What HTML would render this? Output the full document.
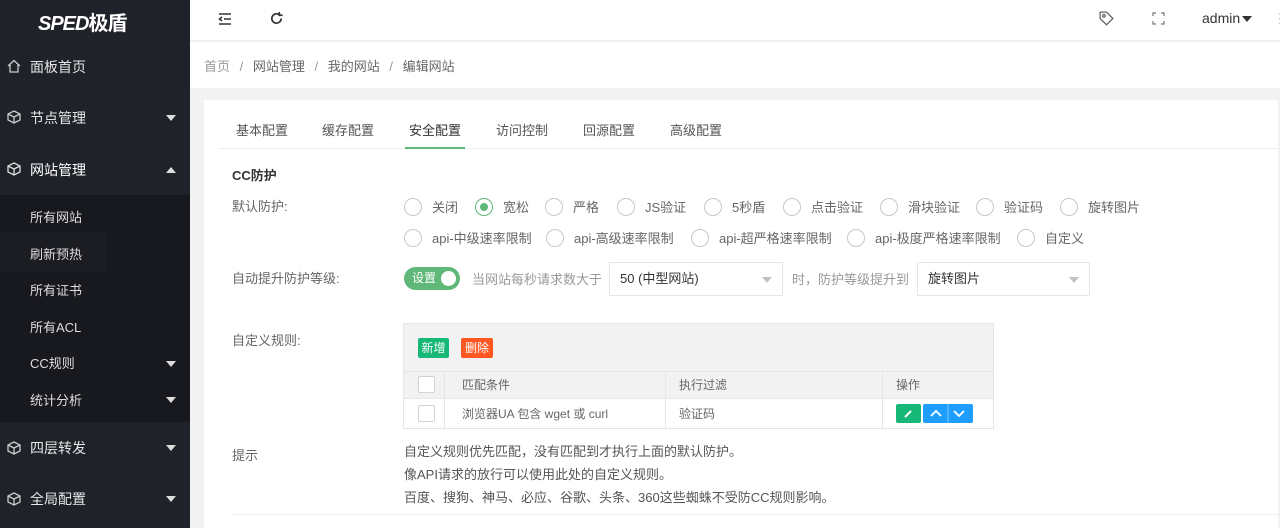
<!DOCTYPE html>
<html><head><meta charset="utf-8"><style>
*{margin:0;padding:0;box-sizing:border-box}
body{width:1280px;height:528px;overflow:hidden;background:#f2f2f2;font-family:"Liberation Sans","Noto Sans CJK SC",sans-serif;font-size:13px;color:#333;position:relative}
.a{position:absolute;white-space:nowrap}
#side{position:absolute;left:0;top:0;width:190px;height:528px;background:#20222a}
#sub{position:absolute;left:0;top:195px;width:190px;height:227px;background:#18191e}
.sm{color:#ddd;font-size:13px}
.mi{color:#e6e6e6;font-size:14px}
.tri{position:absolute;width:0;height:0;border-left:5px solid transparent;border-right:5px solid transparent;border-top:6px solid #ddd}
.triu{border-top:none;border-bottom:6px solid #ddd}
.r{display:inline-block;width:18px;height:18px;border:1px solid #c8c8c8;border-radius:50%;vertical-align:middle;margin-right:10px;position:relative}
.r.on{border-color:#5fb878}
.r.on:after{content:"";position:absolute;left:4px;top:4px;width:8px;height:8px;border-radius:50%;background:#5fb878}
.rl{color:#666;font-size:13px;vertical-align:middle}
.opt{position:absolute;white-space:nowrap}
.sel{position:absolute;height:34px;border:1px solid #e6e6e6;background:#fff;font-size:13px;color:#333;padding:0 10px;line-height:32px}
.sel:after{content:"";position:absolute;right:10px;top:14px;border-left:5px solid transparent;border-right:5px solid transparent;border-top:6px solid #c2c2c2}
.lab{color:#666;font-size:13px}
</style></head><body>
<div id="side">
<div class="a" style="left:38px;top:7px;color:#fff;font-size:20px;font-weight:bold;font-style:italic;letter-spacing:-1px">SPED<span style="font-style:normal">极盾</span></div>
<div class="a mi" style="left:30px;top:57px">面板首页</div>
<svg class="a" style="left:7px;top:59px" width="14" height="14" viewBox="0 0 14 14" fill="none" stroke="#ccc" stroke-width="1.3"><path d="M1 7 7 1.5 13 7M3 5.5V13h8V5.5"/></svg>
<div class="a mi" style="left:30px;top:108px">节点管理</div>
<svg class="a" style="left:7px;top:110px" width="14" height="14" viewBox="0 0 14 14" fill="none" stroke="#ccc" stroke-width="1.3"><path d="M7 1 13 4v6l-6 3-6-3V4zM1 4l6 3 6-3M7 7v6"/></svg>
<div class="tri" style="left:166px;top:115px"></div>
<div class="a mi" style="left:30px;top:160px;color:#fff">网站管理</div>
<svg class="a" style="left:7px;top:162px" width="14" height="14" viewBox="0 0 14 14" fill="none" stroke="#ddd" stroke-width="1.3"><path d="M7 1 13 4v6l-6 3-6-3V4zM1 4l6 3 6-3M7 7v6"/></svg>
<div class="tri triu" style="left:166px;top:167px"></div>
<div id="sub"></div>
<div class="a" style="left:0;top:232px;width:106px;height:40px;background:#1c1d22"></div>
<div class="a sm" style="left:30px;top:207px">所有网站</div>
<div class="a sm" style="left:30px;top:244px">刷新预热</div>
<div class="a sm" style="left:30px;top:280px">所有证书</div>
<div class="a sm" style="left:30px;top:317px">所有ACL</div>
<div class="a sm" style="left:30px;top:353px">CC规则</div>
<div class="tri" style="left:166px;top:361px"></div>
<div class="a sm" style="left:30px;top:390px">统计分析</div>
<div class="tri" style="left:166px;top:397px"></div>
<div class="a mi" style="left:30px;top:438px">四层转发</div>
<svg class="a" style="left:7px;top:441px" width="14" height="14" viewBox="0 0 14 14" fill="none" stroke="#ccc" stroke-width="1.3"><path d="M7 1 13 4v6l-6 3-6-3V4zM1 4l6 3 6-3M7 7v6"/></svg>
<div class="tri" style="left:166px;top:445px"></div>
<div class="a mi" style="left:30px;top:489px">全局配置</div>
<svg class="a" style="left:7px;top:492px" width="14" height="14" viewBox="0 0 14 14" fill="none" stroke="#ccc" stroke-width="1.3"><path d="M7 1 13 4v6l-6 3-6-3V4zM1 4l6 3 6-3M7 7v6"/></svg>
<div class="tri" style="left:166px;top:496px"></div>
</div>
<div class="a" style="left:190px;top:0;width:1090px;height:41px;background:#fff;border-bottom:1px solid #eee"></div>
<svg class="a" style="left:218px;top:12px" width="14" height="14" viewBox="0 0 14 14" fill="none" stroke="#333" stroke-width="1.6"><path d="M1 2h12M6 7h7M1 12h12M4 5 1.5 7 4 9"/></svg>
<svg class="a" style="left:269px;top:11px" width="15" height="15" viewBox="0 0 16 16" fill="none" stroke="#333" stroke-width="1.8"><path d="M13 8a5 5 0 1 1-2-4M11 1v3.5h3.5"/></svg>
<svg class="a" style="left:1098px;top:10px" width="17" height="17" viewBox="0 0 16 16" fill="none" stroke="#666" stroke-width="1.2"><path d="M2 2h6l6 6-6 6-6-6z"/><circle cx="5.5" cy="5.5" r="1.2"/></svg>
<svg class="a" style="left:1152px;top:12px" width="13" height="13" viewBox="0 0 13 13" fill="none" stroke="#777" stroke-width="1.2"><path d="M1 4V1h3M9 1h3v3M12 9v3H9M4 12H1V9"/></svg>
<div class="a" style="left:1202px;top:10px;font-size:14px;color:#333">admin</div>
<div class="tri" style="left:1242px;top:16px;border-top-color:#333"></div>
<div class="a" style="left:1273px;top:11px;color:#ccc">⋮</div>
<div class="a" style="left:190px;top:42px;width:1090px;height:46px;background:#fff"></div>
<div class="a" style="left:204px;top:56px;color:#999">首页 <span style="margin:0 6px">/</span> <span style="color:#666">网站管理</span> <span style="margin:0 6px">/</span> <span style="color:#666">我的网站</span> <span style="margin:0 6px">/</span> <span style="color:#666">编辑网站</span></div>
<div class="a" style="left:204px;top:100px;width:1074px;height:428px;background:#fff"></div>
<div class="a" style="left:218px;top:148px;width:1060px;height:1px;background:#eee"></div>
<div class="a" style="left:236px;top:120px;color:#555">基本配置</div>
<div class="a" style="left:322px;top:120px;color:#555">缓存配置</div>
<div class="a" style="left:409px;top:120px;color:#333">安全配置</div>
<div class="a" style="left:405px;top:147px;width:60px;height:2px;background:#5fb878"></div>
<div class="a" style="left:496px;top:120px;color:#555">访问控制</div>
<div class="a" style="left:583px;top:120px;color:#555">回源配置</div>
<div class="a" style="left:670px;top:120px;color:#555">高级配置</div>
<div class="a" style="left:232px;top:165px;font-weight:bold;color:#333">CC防护</div>
<div class="a lab" style="left:232px;top:196px">默认防护:</div>
<div class="opt" style="left:404px;top:197px"><span class="r"></span><span class="rl">关闭</span></div>
<div class="opt" style="left:475px;top:197px"><span class="r on"></span><span class="rl">宽松</span></div>
<div class="opt" style="left:545px;top:197px"><span class="r"></span><span class="rl">严格</span></div>
<div class="opt" style="left:617px;top:197px"><span class="r"></span><span class="rl">JS验证</span></div>
<div class="opt" style="left:704px;top:197px"><span class="r"></span><span class="rl">5秒盾</span></div>
<div class="opt" style="left:783px;top:197px"><span class="r"></span><span class="rl">点击验证</span></div>
<div class="opt" style="left:880px;top:197px"><span class="r"></span><span class="rl">滑块验证</span></div>
<div class="opt" style="left:976px;top:197px"><span class="r"></span><span class="rl">验证码</span></div>
<div class="opt" style="left:1060px;top:197px"><span class="r"></span><span class="rl">旋转图片</span></div>
<div class="opt" style="left:404px;top:228px"><span class="r"></span><span class="rl">api-中级速率限制</span></div>
<div class="opt" style="left:546px;top:228px"><span class="r"></span><span class="rl">api-高级速率限制</span></div>
<div class="opt" style="left:691px;top:228px"><span class="r"></span><span class="rl">api-超严格速率限制</span></div>
<div class="opt" style="left:847px;top:228px"><span class="r"></span><span class="rl">api-极度严格速率限制</span></div>
<div class="opt" style="left:1017px;top:228px"><span class="r"></span><span class="rl">自定义</span></div>
<div class="a lab" style="left:232px;top:268px">自动提升防护等级:</div>
<div class="a" style="left:404px;top:267px;width:56px;height:23px;border-radius:12px;background:#5fb878;color:#fff;font-size:12px;line-height:23px;padding-left:8px">设置<span style="position:absolute;right:4px;top:4px;width:15px;height:15px;border-radius:50%;background:#fff"></span></div>
<div class="a" style="left:472px;top:269px;color:#999">当网站每秒请求数大于</div>
<div class="sel" style="left:609px;top:262px;width:174px">50 (中型网站)</div>
<div class="a" style="left:792px;top:269px;color:#999">时，防护等级提升到</div>
<div class="sel" style="left:917px;top:262px;width:173px">旋转图片</div>
<div class="a lab" style="left:232px;top:330px">自定义规则:</div>
<div class="a" style="left:403px;top:323px;width:591px;height:106px;border:1px solid #e6e6e6;background:#f2f2f2"></div>
<div class="a" style="left:418px;top:338px;width:31px;height:20px;background:#16b777;color:#fff;font-size:12px;line-height:20px;text-align:center;border-radius:2px">新增</div>
<div class="a" style="left:461px;top:338px;width:32px;height:20px;background:#ff5722;color:#fff;font-size:12px;line-height:20px;text-align:center;border-radius:2px">删除</div>
<div class="a" style="left:404px;top:371px;width:589px;height:1px;background:#e6e6e6"></div>
<div class="a" style="left:404px;top:398px;width:589px;height:30px;background:#fff;border-top:1px solid #e6e6e6"></div>
<div class="a" style="left:444px;top:371px;width:1px;height:57px;background:#e6e6e6"></div>
<div class="a" style="left:665px;top:371px;width:1px;height:57px;background:#e6e6e6"></div>
<div class="a" style="left:882px;top:371px;width:1px;height:57px;background:#e6e6e6"></div>
<div class="a" style="left:418px;top:376px;width:17px;height:17px;border:1px solid #d2d2d2;background:#fff;border-radius:2px"></div>
<div class="a" style="left:418px;top:405px;width:17px;height:17px;border:1px solid #d2d2d2;background:#fff;border-radius:2px"></div>
<div class="a" style="left:462px;top:376px;color:#666;font-size:12px">匹配条件</div>
<div class="a" style="left:679px;top:376px;color:#666;font-size:12px">执行过滤</div>
<div class="a" style="left:896px;top:376px;color:#666;font-size:12px">操作</div>
<div class="a" style="left:462px;top:405px;color:#666;font-size:12px">浏览器UA 包含 wget 或 curl</div>
<div class="a" style="left:679px;top:405px;color:#666;font-size:12px">验证码</div>
<div class="a" style="left:896px;top:404px;width:25px;height:19px;background:#16b777;border-radius:2px"><svg width="25" height="19"><path d="M9 13l6-6" stroke="#fff" stroke-width="2"/></svg></div>
<div class="a" style="left:923px;top:404px;width:50px;height:19px;background:#1e9fff;border-radius:2px"><svg width="50" height="19" fill="none" stroke="#fff" stroke-width="1.8"><path d="M8 12l5-5 5 5M31 7l5 5 5-5"/><path d="M25 0v19" stroke="#7cc6ff" stroke-width="1"/></svg></div>
<div class="a lab" style="left:232px;top:445px">提示</div>
<div class="a" style="left:404px;top:440px;color:#555;line-height:23px;font-size:13px">自定义规则优先匹配，没有匹配到才执行上面的默认防护。<br>像API请求的放行可以使用此处的自定义规则。<br>百度、搜狗、神马、必应、谷歌、头条、360这些蜘蛛不受防CC规则影响。</div>
<div class="a" style="left:232px;top:514px;width:1046px;height:1px;background:#eee"></div>
</body></html>
